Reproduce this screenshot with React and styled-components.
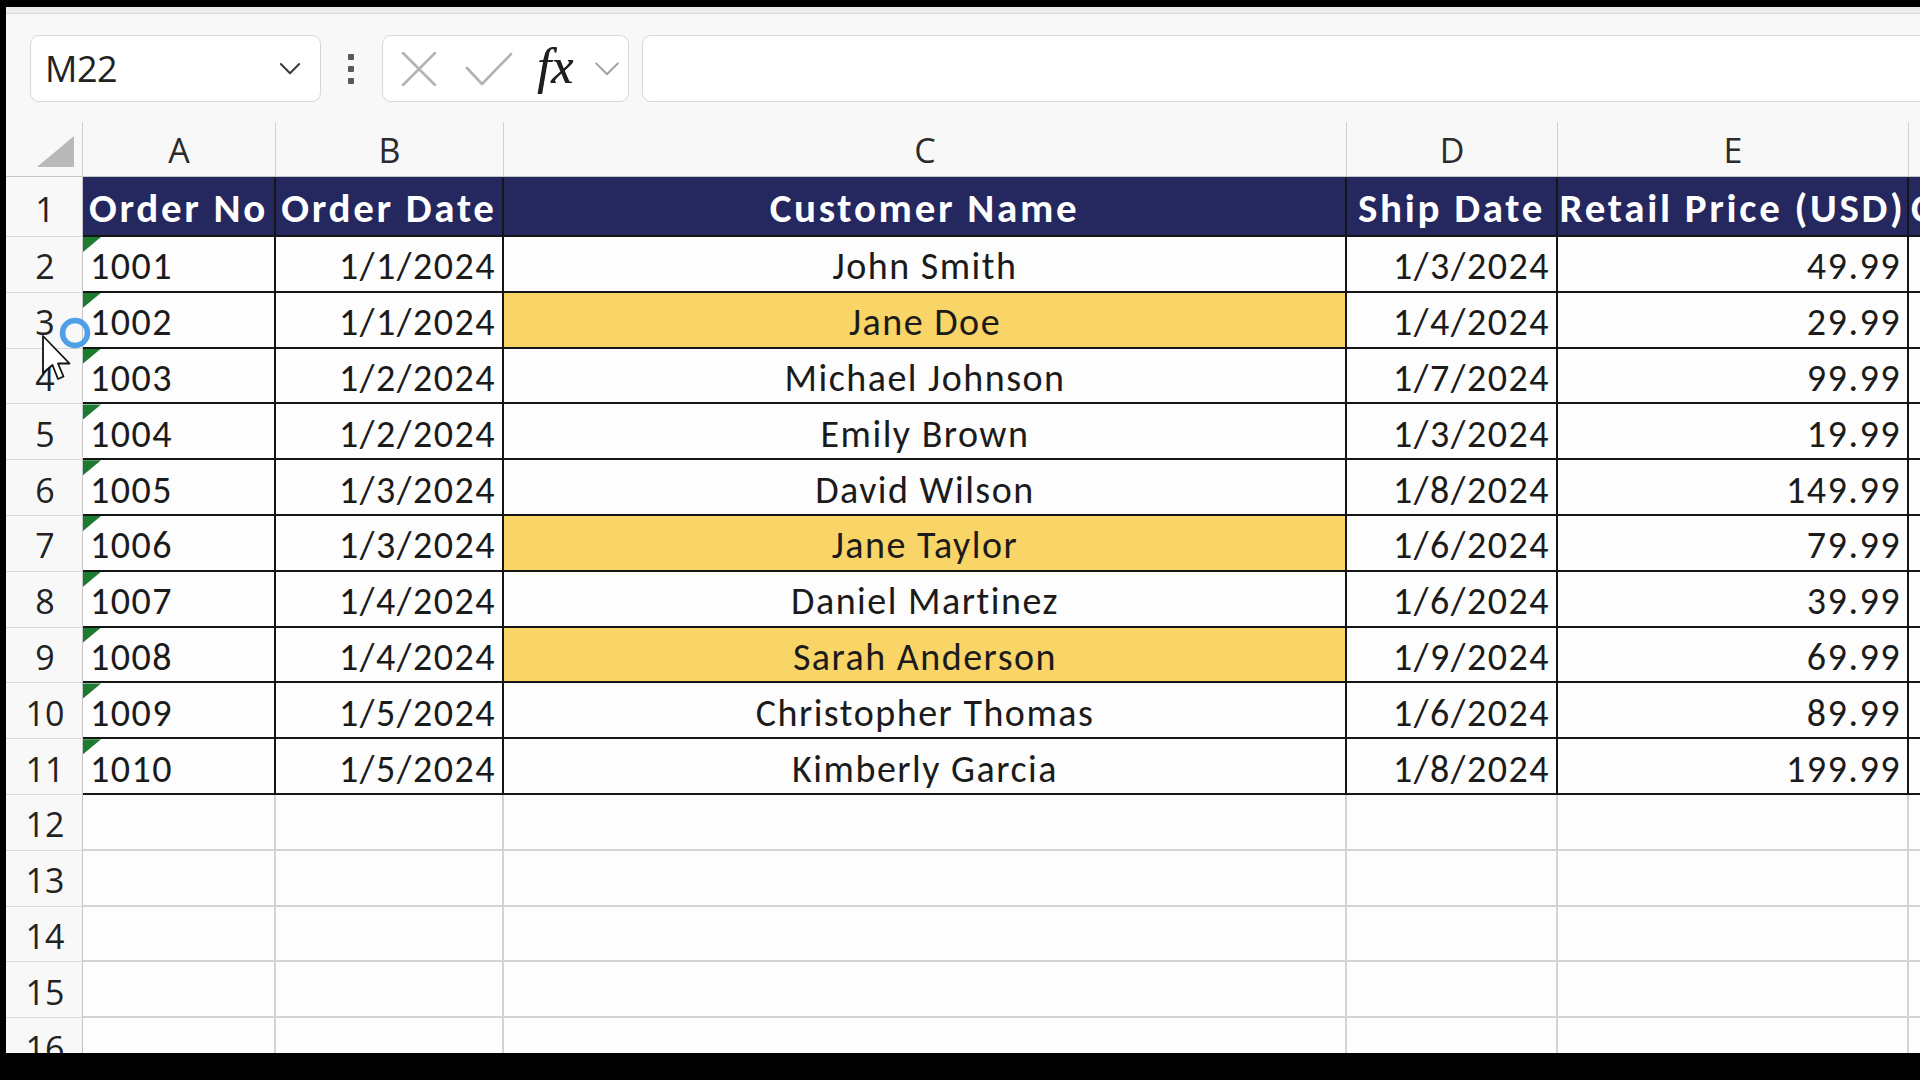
import React from 'react'
import styled, { createGlobalStyle } from 'styled-components'

const GlobalStyle = createGlobalStyle`
  html, body { margin: 0; padding: 0; background: #000; }
  body { width: 1920px; height: 1080px; overflow: hidden; }
  * { box-sizing: border-box; }
`

const NAVY = '#25275f'
const GOLD = '#f9d466'
const INK = '#1b1b1b'
const GRID = '#d3d3d3'
const CELL_FONT = "Calibri, Carlito, Lato, 'Liberation Sans', sans-serif"
const UI_FONT = "'Segoe UI', 'Open Sans', 'Noto Sans', sans-serif"

const Screen = styled.div`
  width: 1920px;
  height: 1080px;
  background: #000;
  overflow: hidden;
  padding: 7px 0 27px 6px;
`

const Window = styled.div`
  position: relative;
  height: 100%;
  background: #f8f8f8;
  overflow: hidden;
  display: flex;
  flex-direction: column;
  & > * { flex-shrink: 0; }
`

const RibbonEdge = styled.div`
  height: 7px;
  background: #ededed;
  border-bottom: 1px solid #d9d9d9;
`

const FormulaBar = styled.div`
  display: flex;
  align-items: center;
  height: 108px;
  padding: 21px 0 20px 24px;
`

const Box = styled.div`
  height: 67px;
  background: #fff;
  border: 1.5px solid #d7d7d7;
  border-radius: 9px;
  display: flex;
  align-items: center;
`

const NameBox = styled(Box)`
  width: 291px;
  justify-content: space-between;
  padding: 0 19px 0 14px;
  font-family: ${UI_FONT};
  font-size: 36px;
  color: #222;
  letter-spacing: -0.5px;
`

const Dots = styled.div`
  margin: 0 28px 0 27px;
  display: flex;
  flex-direction: column;
  gap: 6px;
  span {
    width: 6px;
    height: 6px;
    border-radius: 1px;
    background: #5a5a5a;
  }
`

const FxBox = styled(Box)`
  width: 247px;
  padding: 0 0 0 18px;
`

const IconSlot = styled.div`
  width: ${p => p.$w}px;
  margin-right: ${p => p.$gap || 0}px;
  display: flex;
  align-items: center;
  justify-content: center;
`

const Fx = styled.span`
  font-family: 'Liberation Serif', 'DejaVu Serif', serif;
  font-style: italic;
  font-size: 50px;
  color: #1f1f1f;
  line-height: 1;
  margin: -6px 21px 0 0;
  text-shadow: 0.6px 0 0 #1f1f1f;
`

const Input = styled(Box)`
  flex: 1;
  margin: 0 -20px 0 13px;
`

const Sheet = styled.div`
  display: grid;
  grid-template-columns: 77px 193px 228px 843px 211px 351px 1fr;
  grid-template-rows: 55px 60px repeat(15, 55.8px);
  background: #fdfdfd;
`

const Corner = styled.div`
  background: #f8f8f8;
  border-right: 1px solid #cfcfcf;
  border-bottom: 1px solid #c6c6c6;
  display: flex;
  align-items: flex-end;
  justify-content: flex-end;
  padding: 0 8px 9px 0;
  &::after {
    content: '';
    width: 37px;
    height: 31px;
    background: #b9b9b9;
    clip-path: polygon(100% 0, 100% 100%, 0 100%);
  }
`

const ColHead = styled.div`
  background: #f8f8f8;
  border-right: 1px solid #d2d2d2;
  border-bottom: 1px solid #c6c6c6;
  display: flex;
  align-items: center;
  justify-content: center;
  padding-top: 2px;
  font-family: ${UI_FONT};
  font-size: 34px;
  color: #2b2b2b;
`

const RowHead = styled.div`
  background: #f8f8f8;
  border-right: 1px solid #c6c6c6;
  border-bottom: 1px solid #d8d8d8;
  display: flex;
  align-items: center;
  justify-content: center;
  padding: 4px 0 0 2px;
  font-family: ${UI_FONT};
  font-size: 34px;
  color: #222;
`

const Cell = styled.div`
  position: relative;
  min-width: 0;
  overflow: hidden;
  white-space: nowrap;
  display: flex;
  align-items: center;
  justify-content: ${p => p.$align === 'right' ? 'flex-end' : p.$align === 'center' ? 'center' : 'flex-start'};
  padding: ${p => p.$head ? '4px 2px 0' : '5px 6px 0 7px'};
  background: ${p => p.$head ? NAVY : p.$bg || '#fdfdfd'};
  color: ${p => p.$head ? '#fff' : INK};
  font-family: ${CELL_FONT};
  font-size: ${p => p.$head ? 41 : 38}px;
  letter-spacing: ${p => p.$head ? 2.7 : 1.5}px;
  font-weight: ${p => p.$head ? 700 : 400};
  border-right: 2px solid ${p => p.$table ? '#151515' : GRID};
  border-bottom: 2px solid ${p => p.$table ? '#151515' : GRID};
`

const TextFlag = styled.span`
  position: absolute;
  left: 0;
  top: 0;
  width: 18px;
  height: 15px;
  background: #1d7a31;
  clip-path: polygon(0 0, 100% 0, 0 100%);
`

const Pointer = styled.svg`
  position: absolute;
  left: 30px;
  top: 305px;
  pointer-events: none;
`

const Chevron = ({ size = 24, color = '#3a3a3a', width = 2.2 }) => (
  <svg width={size} height={size * 0.6} viewBox="0 0 24 14">
    <polyline points="2,2 12,12 22,2" fill="none" stroke={color} strokeWidth={width} strokeLinecap="round" strokeLinejoin="round" />
  </svg>
)

const headers = ['Order No', 'Order Date', 'Customer Name', 'Ship Date', 'Retail Price (USD)', 'Cost Price (USD)']
const aligns = ['left', 'right', 'center', 'right', 'right', 'right']

const orders = [
  ['1001', '1/1/2024', 'John Smith', '1/3/2024', '49.99'],
  ['1002', '1/1/2024', 'Jane Doe', '1/4/2024', '29.99', true],
  ['1003', '1/2/2024', 'Michael Johnson', '1/7/2024', '99.99'],
  ['1004', '1/2/2024', 'Emily Brown', '1/3/2024', '19.99'],
  ['1005', '1/3/2024', 'David Wilson', '1/8/2024', '149.99'],
  ['1006', '1/3/2024', 'Jane Taylor', '1/6/2024', '79.99', true],
  ['1007', '1/4/2024', 'Daniel Martinez', '1/6/2024', '39.99'],
  ['1008', '1/4/2024', 'Sarah Anderson', '1/9/2024', '69.99', true],
  ['1009', '1/5/2024', 'Christopher Thomas', '1/6/2024', '89.99'],
  ['1010', '1/5/2024', 'Kimberly Garcia', '1/8/2024', '199.99'],
]

export default function App() {
  return <>
    <GlobalStyle />
    <Screen>
      <Window>
        <RibbonEdge />
        <FormulaBar>
          <NameBox>
            <span>M22</span>
            <Chevron size={22} />
          </NameBox>
          <Dots><span /><span /><span /></Dots>
          <FxBox>
            <IconSlot $w={36} $gap={28}>
              <svg width="36" height="34" viewBox="0 0 36 34">
                <path d="M2 1 L34 33 M34 1 L2 33" stroke="#b3b3b3" strokeWidth="2.6" strokeLinecap="round" />
              </svg>
            </IconSlot>
            <IconSlot $w={48} $gap={24}>
              <svg width="48" height="34" viewBox="0 0 48 34">
                <polyline points="2,16 17,32 46,2" fill="none" stroke="#b3b3b3" strokeWidth="2.6" strokeLinecap="round" strokeLinejoin="round" />
              </svg>
            </IconSlot>
            <Fx>fx</Fx>
            <Chevron size={26} color="#a0a0a0" width={1.8} />
          </FxBox>
          <Input />
        </FormulaBar>

        <Sheet>
          <Corner />
          {['A', 'B', 'C', 'D', 'E', 'F'].map(l => <ColHead key={l}>{l === 'F' ? '' : l}</ColHead>)}

          <RowHead>1</RowHead>
          {headers.map((h, i) => (
            <Cell key={h} $head $table $align={i === 5 ? 'left' : 'center'}>{h}</Cell>
          ))}

          {orders.map((o, r) => (
            <React.Fragment key={o[0]}>
              <RowHead>{r + 2}</RowHead>
              {o.slice(0, 5).map((v, c) => (
                <Cell key={c} $table $align={aligns[c]} $bg={c === 2 && o[5] ? GOLD : undefined}>
                  {c === 0 && <TextFlag />}
                  {v}
                </Cell>
              ))}
              <Cell $table />
            </React.Fragment>
          ))}

          {[12, 13, 14, 15, 16].map(n => (
            <React.Fragment key={n}>
              <RowHead>{n}</RowHead>
              {[0, 1, 2, 3, 4, 5].map(c => <Cell key={c} />)}
            </React.Fragment>
          ))}
        </Sheet>

        <Pointer width="70" height="90" viewBox="0 0 70 90">
          <circle cx="39" cy="21" r="12.5" fill="none" stroke="#3d96e4" strokeWidth="5.5" opacity="0.9" />
          <path d="M7 24 L7 61 L16.5 53 L22 67 L27.5 64.5 L22 51.5 L33.5 51.5 Z" fill="#fff" stroke="#111" strokeWidth="1.8" strokeLinejoin="round" />
        </Pointer>
      </Window>
    </Screen>
  </>
}
